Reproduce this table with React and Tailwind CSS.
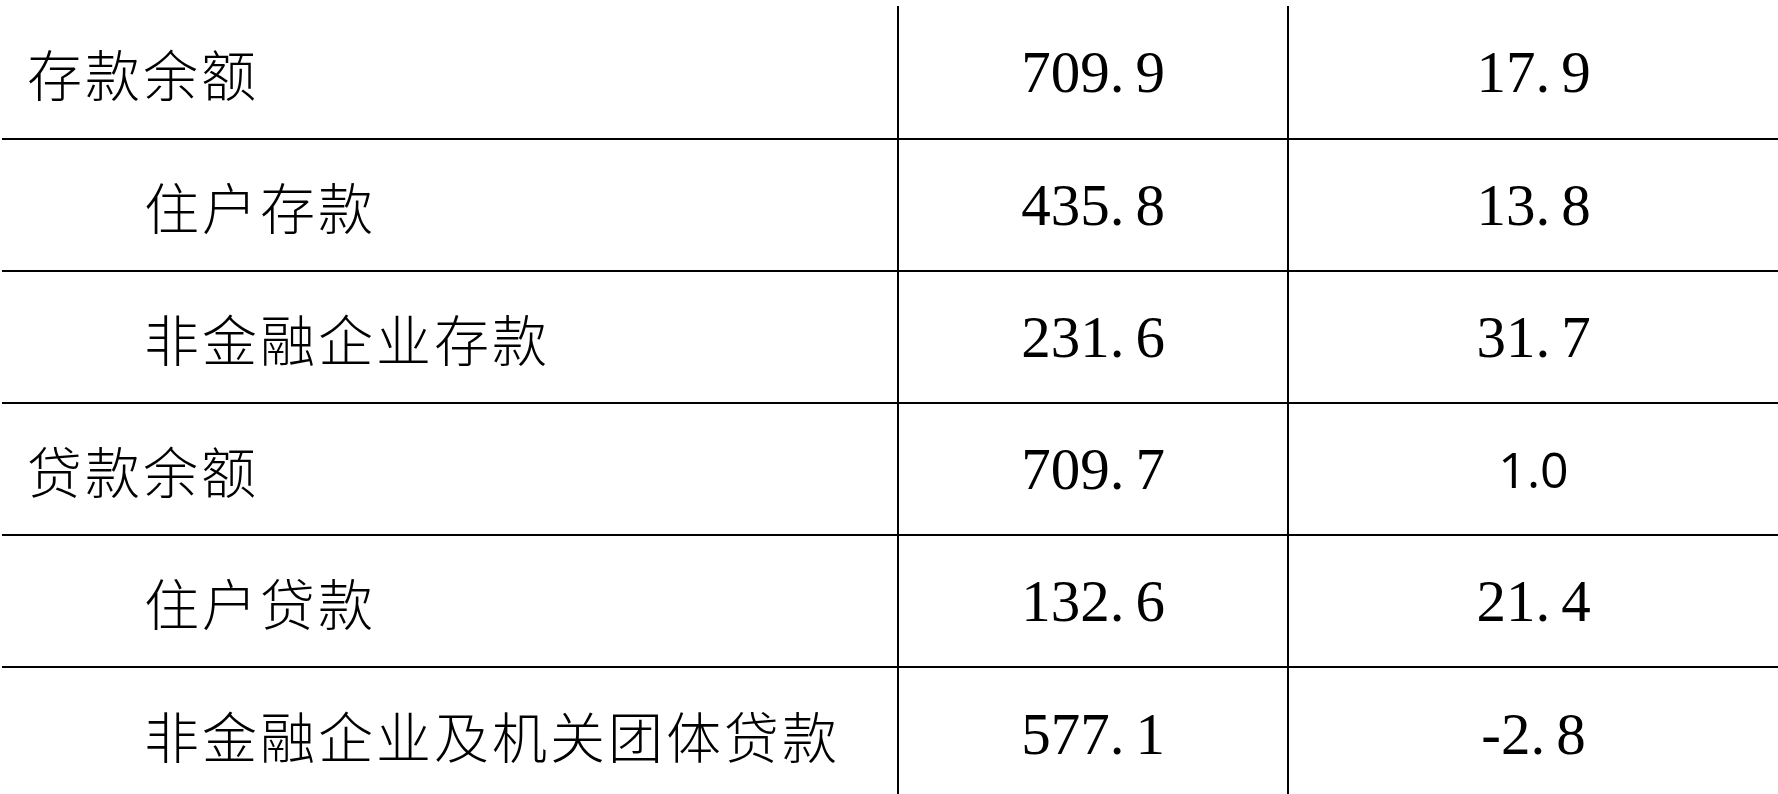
import React from 'react';

const rows = [
    { label: '存款余额', indent: false, value: '709.9', change: '17.9' },
    { label: '住户存款', indent: true, value: '435.8', change: '13.8' },
    { label: '非金融企业存款', indent: true, value: '231.6', change: '31.7' },
    { label: '贷款余额', indent: false, value: '709.7', change: '1.0', sansChange: true },
    { label: '住户贷款', indent: true, value: '132.6', change: '21.4' },
    { label: '非金融企业及机关团体贷款', indent: true, value: '577.1', change: '-2.8' },
];

// serif digits with the wide full-stop of the source document
const Num = ({ text }) => {
    const [a, b] = text.split('.');
    return (
        <span className="font-['Liberation_Serif',serif] text-[59px] leading-none text-black">
            {a}<span className="mr-[11px]">.</span>{b}
        </span>
    );
};

const App = () => {
    return (
        <div className="w-[1778px] h-[794px] overflow-hidden bg-white pt-[6px] pl-[2px]">
            {rows.map((row, i) => (
                <div
                    key={row.label}
                    className={`flex ${i === 0 ? 'h-[134px]' : 'h-[132px]'} ${i < rows.length - 1 ? 'border-b-2 border-black' : ''}`}
                >
                    <div
                        className={`w-[897px] shrink-0 border-r-2 border-black flex items-center ${row.indent ? 'pl-[142px]' : 'pl-[25px]'}`}
                    >
                        <span className="font-['Noto_Sans_CJK_SC',sans-serif] font-light text-[55px] leading-none tracking-[3px] text-black">
                            {row.label}
                        </span>
                    </div>
                    <div className="w-[390px] shrink-0 border-r-2 border-black flex items-center justify-center">
                        <Num text={row.value} />
                    </div>
                    <div className="flex-1 flex items-center justify-center">
                        {row.sansChange ? (
                            <span className="font-['Open_Sans',sans-serif] text-[50px] leading-none text-black">
                                {row.change}
                            </span>
                        ) : (
                            <Num text={row.change} />
                        )}
                    </div>
                </div>
            ))}
        </div>
    );
};

export default App;
